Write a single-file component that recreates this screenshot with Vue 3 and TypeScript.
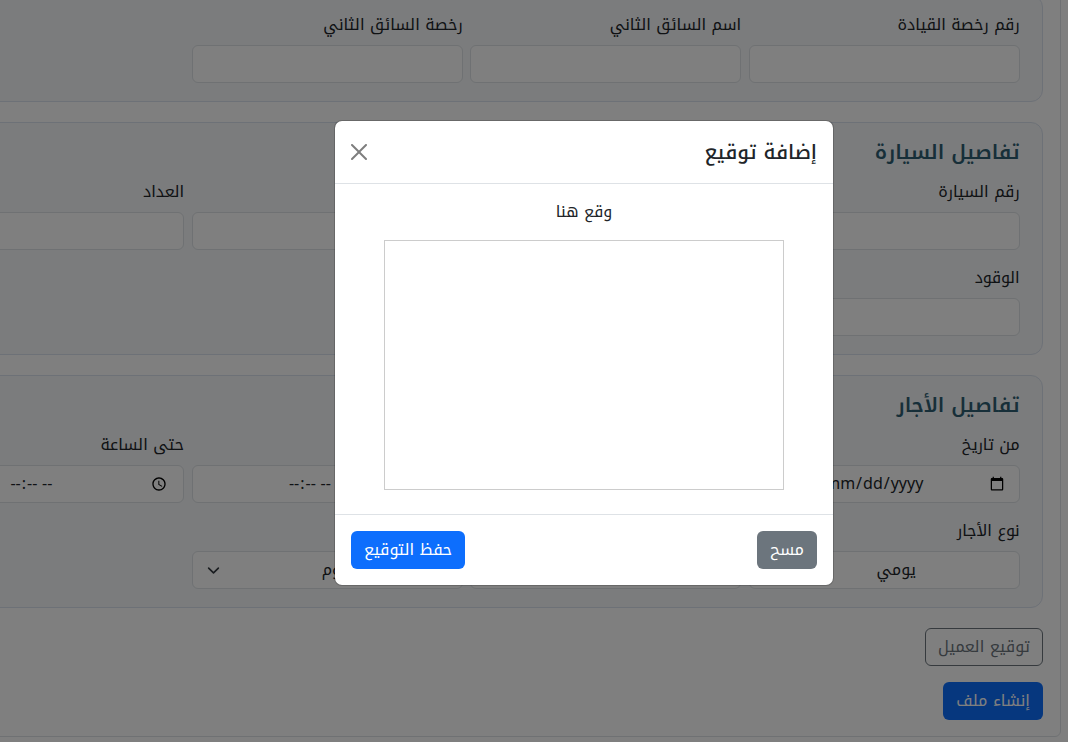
<script setup lang="ts">
const driver = [
  { label: 'رقم رخصة القيادة' },
  { label: 'اسم السائق الثاني' },
  { label: 'رخصة السائق الثاني' },
]
</script>

<template>
  <div class="viewport">
    <div class="page">
      <div class="outer">
        <section class="panel">
          <div class="grid">
            <div v-for="f in driver" :key="f.label" class="field">
              <label>{{ f.label }}</label>
              <input class="control" type="text" />
            </div>
          </div>
        </section>

        <section class="panel">
          <h5>تفاصيل السيارة</h5>
          <div class="grid">
            <div class="field"><label>رقم السيارة</label><input class="control" type="text" /></div>
            <div class="field"><label>نوع السيارة</label><input class="control" type="text" /></div>
            <div class="field"><label>لون السيارة</label><input class="control" type="text" /></div>
            <div class="field"><label>العداد</label><input class="control" type="text" /></div>
            <div class="field"><label>الوقود</label><input class="control" type="text" /></div>
          </div>
        </section>

        <section class="panel">
          <h5>تفاصيل الأجار</h5>
          <div class="grid">
            <div class="field"><label>من تاريخ</label><input class="control dt" type="date" /></div>
            <div class="field"><label>إلى تاريخ</label><input class="control dt" type="date" /></div>
            <div class="field"><label>من الساعة</label><input class="control dt time" type="time" /></div>
            <div class="field"><label>حتى الساعة</label><input class="control dt time" type="time" /></div>
            <div class="field">
              <label>نوع الأجار</label>
              <div class="control select">
                <svg class="chev" viewBox="0 0 16 16"><path fill="none" stroke="#343a40" stroke-linecap="round" stroke-linejoin="round" stroke-width="2" d="m2 5 6 6 6-6" /></svg>
                <span>يومي</span>
              </div>
            </div>
            <div class="field"><label>عدد الأيام</label><input class="control" type="text" /></div>
            <div class="field">
              <label>الوحدة</label>
              <div class="control select">
                <svg class="chev" viewBox="0 0 16 16"><path fill="none" stroke="#343a40" stroke-linecap="round" stroke-linejoin="round" stroke-width="2" d="m2 5 6 6 6-6" /></svg>
                <span>اليوم</span>
              </div>
            </div>
          </div>
        </section>

        <div class="actions">
          <button class="btn outline" type="button">توقيع العميل</button>
          <button class="btn primary" type="button">إنشاء ملف</button>
        </div>
      </div>
    </div>

    <div class="backdrop"></div>

    <div class="modal">
      <header class="modal-head">
        <h5>إضافة توقيع</h5>
        <button class="close" type="button" aria-label="إغلاق">
          <svg viewBox="0 0 16 16"><path fill="#000" d="M.293.293a1 1 0 0 1 1.414 0L8 6.586 14.293.293a1 1 0 1 1 1.414 1.414L9.414 8l6.293 6.293a1 1 0 0 1-1.414 1.414L8 9.414l-6.293 6.293a1 1 0 0 1-1.414-1.414L6.586 8 .293 1.707a1 1 0 0 1 0-1.414" /></svg>
        </button>
      </header>
      <div class="modal-body">
        <p>وقع هنا</p>
        <div class="pad"></div>
      </div>
      <footer class="modal-foot">
        <button class="btn secondary" type="button">مسح</button>
        <button class="btn primary" type="button">حفظ التوقيع</button>
      </footer>
    </div>
  </div>
</template>

<style>
html, body { margin: 0; background: #fff; }
</style>

<style scoped>
.viewport {
  height: 742px;
  overflow: hidden;
  position: relative;
  font-family: "Noto Kufi Arabic", "Noto Sans", sans-serif;
  font-size: 16px;
  line-height: 1.5;
  color: #212529;
  background: #fff;
}
.page {
  direction: rtl;
  width: 1068px;
  margin-top: -6px;
  padding: 0 7px 0 0;
  box-sizing: border-box;
}
.outer {
  width: 1200px;
  box-sizing: border-box;
  padding: 0 17px 16px;
  border: 1px solid #dee2e6;
  border-radius: 6px;
  background: #fff;
}
.panel {
  width: 1153px;
  box-sizing: border-box;
  border: 1px solid #dbe3ee;
  border-radius: 12px;
  background: #f6f8fb;
  padding: 17px 22.4px 18px;
  margin-bottom: 20px;
}
h5 {
  margin: 0 0 16px;
  font-size: 20px;
  font-weight: 500;
  line-height: 24px;
}
.panel h5 { color: #2f5f73; font-weight: 600; }
.grid {
  display: grid;
  grid-template-columns: repeat(4, 270.7px);
  gap: 16px 7.8px;
}
.field { display: flex; flex-direction: column; min-width: 0; }
label { height: 24px; margin-bottom: 8px; white-space: nowrap; }
.control {
  box-sizing: border-box;
  height: 38px;
  width: 100%;
  padding: 6px 12px;
  border: 1px solid #dee2e6;
  border-radius: 6px;
  background: #fff;
  font: inherit;
  color: #212529;
}
.dt { direction: ltr; text-align: center; }
.time::-webkit-datetime-edit { transform: translateX(-2px); }
.select {
  position: relative;
  display: flex;
  align-items: center;
  justify-content: center;
  padding-left: 36px;
}
.chev {
  position: absolute;
  left: 14.5px;
  top: 11.5px;
  width: 13px;
  height: 13px;
}
.actions {
  display: flex;
  flex-direction: column;
  align-items: flex-start;
  gap: 16px;
}
.btn {
  height: 38px;
  box-sizing: border-box;
  padding: 6px 12px;
  border: 1px solid transparent;
  border-radius: 6px;
  font: inherit;
  cursor: pointer;
}
.primary { background: #0d6efd; color: #fff; }
.secondary { background: #6c757d; color: #fff; }
.outline { background: transparent; border-color: #6c757d; color: #6c757d; }
.backdrop {
  position: absolute;
  inset: 0;
  background: rgba(0, 0, 0, 0.5);
}
.modal {
  position: absolute;
  left: 334px;
  top: 120px;
  width: 500px;
  box-sizing: border-box;
  direction: rtl;
  background: #fff;
  border: 1px solid rgba(0, 0, 0, 0.175);
  border-radius: 8px;
  background-clip: padding-box;
}
.modal-head {
  display: flex;
  align-items: center;
  justify-content: space-between;
  height: 63px;
  box-sizing: border-box;
  padding: 0 16px;
  border-bottom: 1px solid #dee2e6;
}
.modal-head h5 { margin: 0; }
.close {
  width: 16px;
  height: 16px;
  padding: 0;
  border: 0;
  background: none;
  opacity: 0.5;
  display: block;
}
.close svg { display: block; width: 16px; height: 16px; }
.modal-body { padding: 16px 16px 24px; text-align: center; }
.modal-body p { margin: 0 0 16px; }
.pad {
  width: 400px;
  height: 250px;
  box-sizing: border-box;
  margin: 0 auto;
  border: 1px solid #ccc;
}
.modal-foot {
  display: flex;
  justify-content: space-between;
  align-items: center;
  padding: 16px;
  border-top: 1px solid #dee2e6;
}
</style>
